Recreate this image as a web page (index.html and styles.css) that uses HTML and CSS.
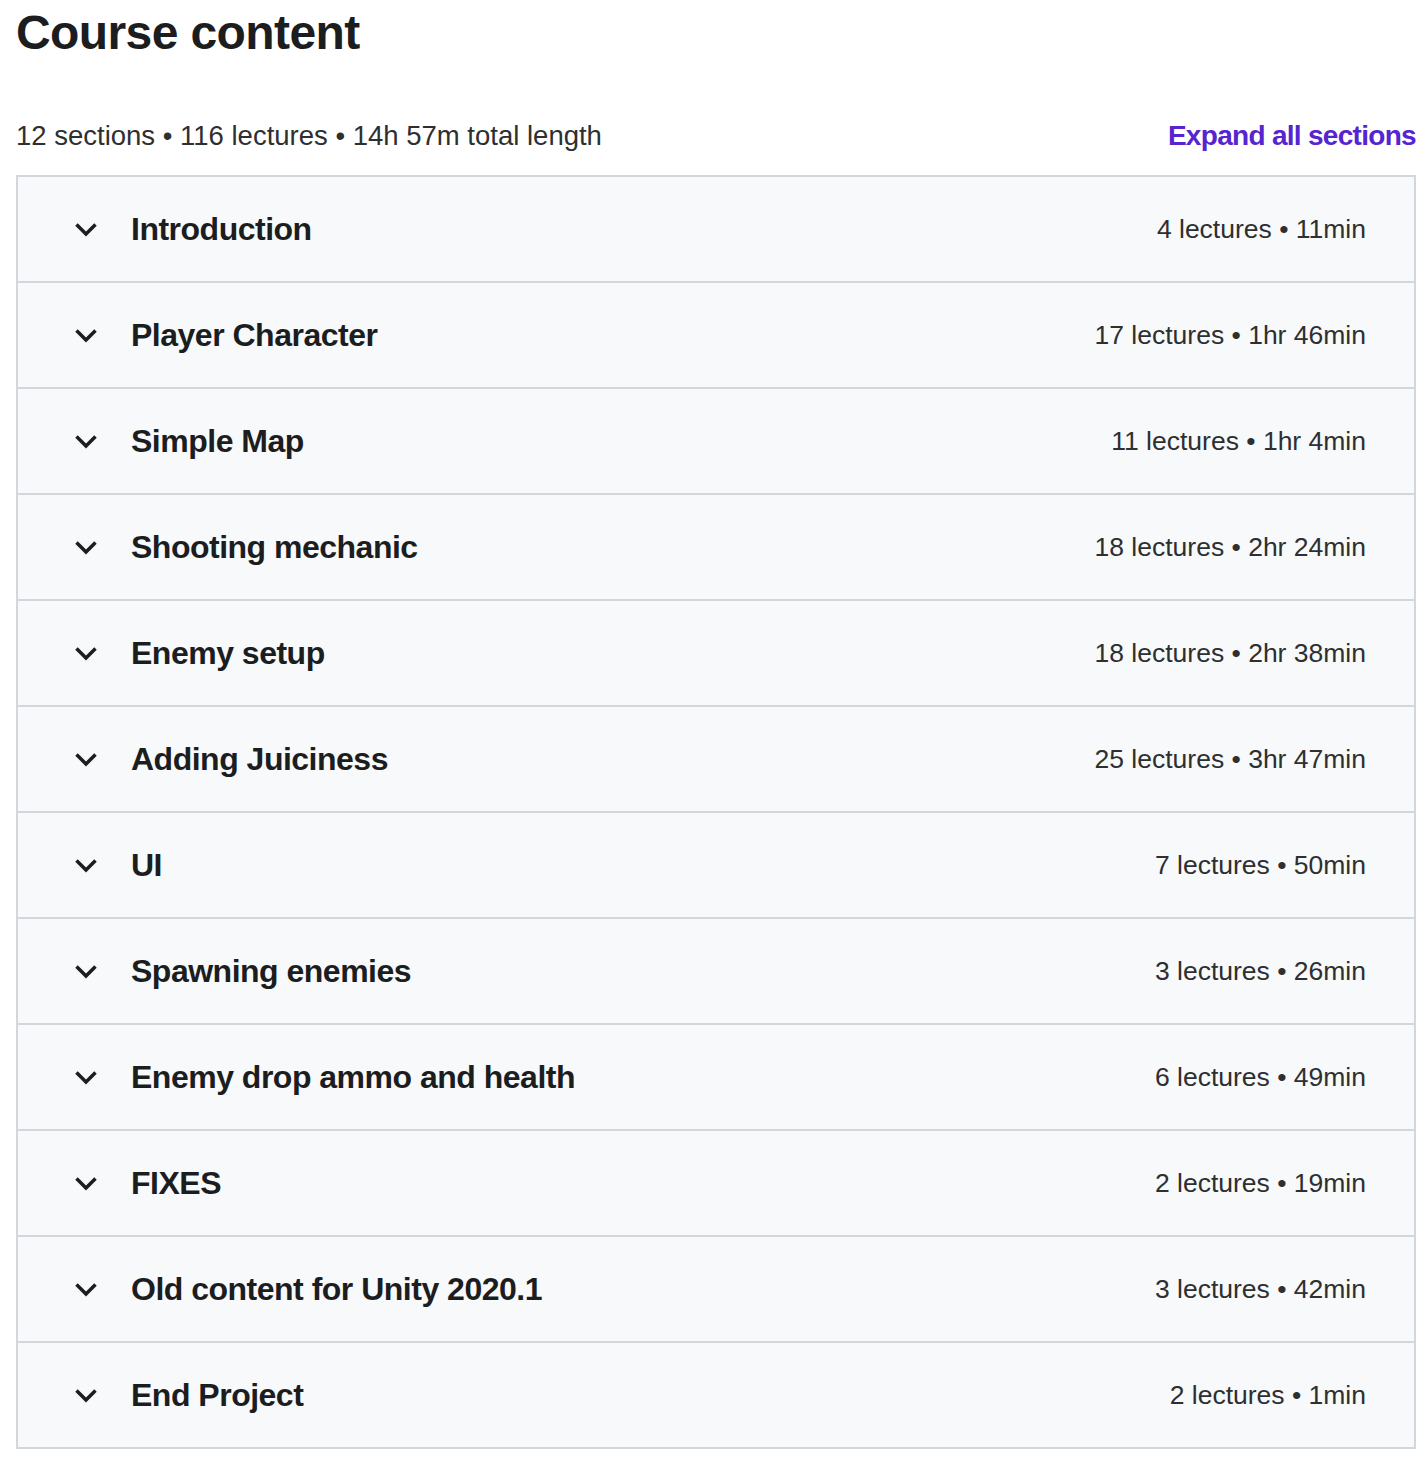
FILE: index.html
```html
<!DOCTYPE html>
<html lang="en">
<head>
<meta charset="utf-8">
<title>Course content</title>
<link rel="stylesheet" href="styles.css">
</head>
<body>
<div class="page">
  <h2 class="heading">Course content</h2>
  <div class="summary">
    <span class="summary-text">12 sections • 116 lectures • 14h 57m total length</span>
    <button class="expand-all">Expand all sections</button>
  </div>
  <div class="sections">
    <div class="section"><span class="chev"><svg viewBox="0 0 32 32"><path d="M10.5 11.5L20 21l9.5-9.5"/></svg></span><span class="title">Introduction</span><span class="meta">4 lectures • 11min</span></div>
    <div class="section"><span class="chev"><svg viewBox="0 0 32 32"><path d="M10.5 11.5L20 21l9.5-9.5"/></svg></span><span class="title">Player Character</span><span class="meta">17 lectures • 1hr 46min</span></div>
    <div class="section"><span class="chev"><svg viewBox="0 0 32 32"><path d="M10.5 11.5L20 21l9.5-9.5"/></svg></span><span class="title">Simple Map</span><span class="meta">11 lectures • 1hr 4min</span></div>
    <div class="section"><span class="chev"><svg viewBox="0 0 32 32"><path d="M10.5 11.5L20 21l9.5-9.5"/></svg></span><span class="title">Shooting mechanic</span><span class="meta">18 lectures • 2hr 24min</span></div>
    <div class="section"><span class="chev"><svg viewBox="0 0 32 32"><path d="M10.5 11.5L20 21l9.5-9.5"/></svg></span><span class="title">Enemy setup</span><span class="meta">18 lectures • 2hr 38min</span></div>
    <div class="section"><span class="chev"><svg viewBox="0 0 32 32"><path d="M10.5 11.5L20 21l9.5-9.5"/></svg></span><span class="title">Adding Juiciness</span><span class="meta">25 lectures • 3hr 47min</span></div>
    <div class="section"><span class="chev"><svg viewBox="0 0 32 32"><path d="M10.5 11.5L20 21l9.5-9.5"/></svg></span><span class="title">UI</span><span class="meta">7 lectures • 50min</span></div>
    <div class="section"><span class="chev"><svg viewBox="0 0 32 32"><path d="M10.5 11.5L20 21l9.5-9.5"/></svg></span><span class="title">Spawning enemies</span><span class="meta">3 lectures • 26min</span></div>
    <div class="section"><span class="chev"><svg viewBox="0 0 32 32"><path d="M10.5 11.5L20 21l9.5-9.5"/></svg></span><span class="title">Enemy drop ammo and health</span><span class="meta">6 lectures • 49min</span></div>
    <div class="section"><span class="chev"><svg viewBox="0 0 32 32"><path d="M10.5 11.5L20 21l9.5-9.5"/></svg></span><span class="title">FIXES</span><span class="meta">2 lectures • 19min</span></div>
    <div class="section"><span class="chev"><svg viewBox="0 0 32 32"><path d="M10.5 11.5L20 21l9.5-9.5"/></svg></span><span class="title">Old content for Unity 2020.1</span><span class="meta">3 lectures • 42min</span></div>
    <div class="section"><span class="chev"><svg viewBox="0 0 32 32"><path d="M10.5 11.5L20 21l9.5-9.5"/></svg></span><span class="title">End Project</span><span class="meta">2 lectures • 1min</span></div>
  </div>
</div>
</body>
</html>
```
FILE: styles.css
```css
* { box-sizing: border-box; }
html, body { margin: 0; padding: 0; background: #ffffff; }
body {
  font-family: "Liberation Sans", Arial, sans-serif;
  color: #2d2f31;
}
.page {
  width: 1400px;
  margin-left: 16px;
}
.heading {
  margin: 0;
  padding-top: 3px;
  font-size: 48px;
  line-height: 60px;
  font-weight: 700;
  letter-spacing: -0.6px;
  color: #1c1d1f;
}
.summary {
  margin-top: 53px;
  display: flex;
  justify-content: space-between;
  align-items: baseline;
  height: 40px;
  margin-bottom: 19px;
}
.summary-text {
  font-size: 27.5px;
  line-height: 40px;
}
.expand-all {
  border: 0;
  background: none;
  padding: 0;
  font-family: inherit;
  font-size: 28px;
  line-height: 40px;
  font-weight: 700;
  color: #5624d0;
  cursor: pointer;
  letter-spacing: -0.7px;
}
.sections {
  border: 2px solid #d1d7dc;
}
.section {
  display: flex;
  align-items: center;
  height: 106px;
  padding: 0 48px;
  background: #f7f9fa;
  border-top: 2px solid #d1d7dc;
}
.section:first-child {
  border-top: 0;
  height: 104px;
}
.chev {
  width: 32px;
  height: 32px;
  margin-right: 33px;
  display: flex;
}
.chev svg {
  width: 32px;
  height: 32px;
  fill: none;
  stroke: #1c1d1f;
  stroke-width: 3.5;
  stroke-linecap: butt;
  stroke-linejoin: miter;
}
.title {
  flex: 1;
  font-size: 32px;
  line-height: 40px;
  font-weight: 700;
  letter-spacing: -0.5px;
  color: #1c1d1f;
}
.meta {
  font-size: 26.5px;
  line-height: 40px;
  color: #2d2f31;
}
```
